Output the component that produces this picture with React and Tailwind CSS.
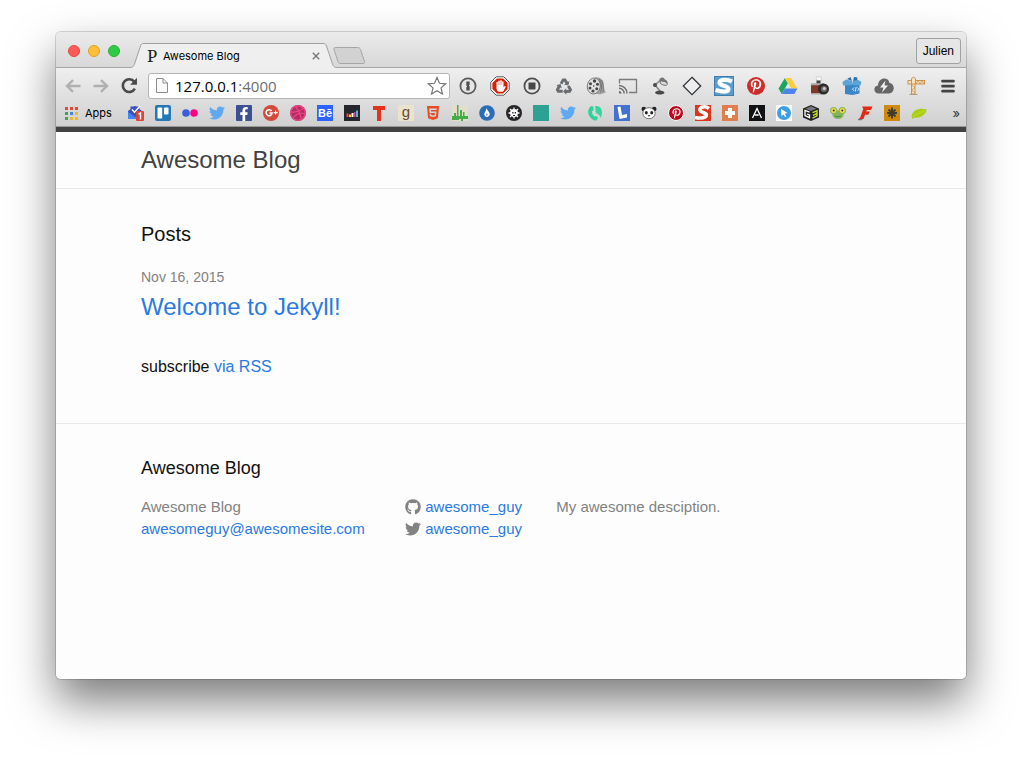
import React from "react";
import {
  FaTwitter, FaFacebookF, FaDribbble, FaHtml5, FaGithub, FaPinterestP,
} from "react-icons/fa";

const S = ({ v = 16, className = "size-4", children }) => (
  <svg viewBox={`0 0 ${v} ${v}`} className={className} aria-hidden="true">{children}</svg>
);

const Arrow = ({ flip }) => (
  <svg viewBox="0 0 16 14" className={flip ? "h-3.5 w-4 rotate-180" : "h-3.5 w-4"} fill="none" stroke="#b0b0b0" strokeWidth="2.4" aria-hidden="true">
    <path d="M15.500 7H2M8 1.200 2 7l6 5.800" />
  </svg>
);

const Pinterest = ({ className }) => (
  <span className={`flex items-center justify-center rounded-full text-white ${className}`}>
    <FaPinterestP />
  </span>
);

const RecycleArm = ({ rotate }) => (
  <path d="M5.800 7 8.400 2.500h3.400L13.900 6l1.500-.9-1 4.500-4.400-1.200 1.400-.8-1.300-2.300L8.200 8.500z" transform={`rotate(${rotate} 10 11)`} />
);

const extensions = [
  ["Password manager", <S v={20} className="size-5"><circle cx="10" cy="10" r="7.600" fill="#e6e6e6" stroke="#5c5c5c" strokeWidth="1.800" /><path d="M8.300 5.500h3.400v3.200l-.8.9.8.9v4H8.300v-3.200l.8-.9-.8-.9z" fill="#505050" /></S>],
  ["Ad blocker", <S v={20} className="size-5"><path d="M6.200.8h7.600l5.400 5.400v7.600l-5.400 5.400H6.200L.8 13.800V6.200z" fill="#fff" stroke="#555" strokeWidth="1" /><path d="M6.900 2.400h6.200l4.500 4.500v6.200l-4.500 4.500H6.900l-4.500-4.500V6.900z" fill="#d81e05" /><path d="M6.500 9.500V6.200q.8-.9 1.400 0V9h.4V4.900q.8-.9 1.500 0V9h.4V4.400q.8-.9 1.500 0V9h.4V5.600q.8-.8 1.400 0v6l1-1.400q1.100-.5 1.200.6l-2.200 4.100q-.6.900-1.600.9H9q-2.500-.4-2.500-3z" fill="#fff" /></S>],
  ["Stop", <S v={20} className="size-5"><circle cx="10" cy="10" r="7.600" fill="#e6e6e6" stroke="#505050" strokeWidth="1.800" /><rect x="6.500" y="6.500" width="7" height="7" rx=".8" fill="#484848" /></S>],
  ["Recycle", <S v={20} className="size-5"><g fill="#696d71"><RecycleArm rotate={0} /><RecycleArm rotate={120} /><RecycleArm rotate={240} /></g></S>],
  ["Film", <S v={20} className="size-5"><path d="M9 1.500c6-1 9 3 9 8 0 3 .5 5 2 7l-6 2-6-1z" fill="#a5a5a5" /><path d="M13 2.500c3 4 3 10 1.500 14M15.500 4c2 4 2 9 1.500 12" fill="none" stroke="#666" strokeWidth=".8" /><ellipse cx="7.800" cy="10" rx="6.500" ry="8" fill="#e2e2e2" stroke="#666" strokeWidth=".8" transform="rotate(10 7.800 10)" /><g fill="#484848"><circle cx="8.500" cy="5" r="1.700" /><circle cx="4.500" cy="7.800" r="1.500" /><circle cx="4" cy="12" r="1.500" /><circle cx="7" cy="15" r="1.600" /><circle cx="10.700" cy="12.800" r="1.500" /><circle cx="11.500" cy="8.300" r="1.500" /><circle cx="7.700" cy="10" r=".8" /></g></S>],
  ["Cast", <S v={20} className="size-5"><path d="M1.500 7.500V3.500h17V16.500H11" fill="none" stroke="#7b7b7b" strokeWidth="1.300" /><path d="M1 9.500a8 8 0 0 1 8 8M1 12.300a5.200 5.200 0 0 1 5.200 5.200" fill="none" stroke="#6a6a6a" strokeWidth="1.400" /><path d="M1 15a2.500 2.500 0 0 1 2.500 2.500H1z" fill="#6a6a6a" /></S>],
  ["Lamp", <S v={20} className="size-5"><path d="m10.500 4-5.500 5 5 6" fill="none" stroke="#888" strokeWidth="1.600" /><path d="M9.500 3Q13 0 15 3.500q3 1 2.500 4.500L10 7z" fill="#757575" /><ellipse cx="13.700" cy="7.200" rx="3.800" ry="1.900" fill="#ddd" stroke="#666" strokeWidth=".8" transform="rotate(18 13.700 7.200)" /><circle cx="5" cy="9" r="2" fill="#4a4a4a" /><path d="M5 16.500c1.500-2.800 8-2.800 9.500 0-.5 2.800-9 2.800-9.500 0z" fill="#484848" /></S>],
  ["Diamond", <S v={20} className="size-5"><path d="m10 1.300 8.700 8.700-8.700 8.700L1.300 10z" fill="#ededed" stroke="#30343a" strokeWidth="1.300" /></S>],
  ["Stylish", <S v={20} className="size-5"><rect x=".5" y=".5" width="19" height="19" fill="#5c9ccc" stroke="#3f7daf" /><path d="M18 5.500C14 3.500 6 3 5.500 6.500S14.500 9.500 14.500 13s-6.500 3-13 1" fill="none" stroke="#fff" strokeWidth="4.200" /></S>],
  ["Pin it", <Pinterest className="size-[18px] bg-[#c9302c] text-[14px]" />],
  ["Drive", <S v={20} className="size-5"><path d="M7 2h6l6.300 10.500h-6z" fill="#fccd3a" /><path d="M6.700 2.200 9.800 7.500 3.700 18 .6 12.600z" fill="#1da362" /><path d="M7 12.500h12.400L16.300 18H3.800z" fill="#4c83ee" /></S>],
  ["Camera", <S v={20} className="size-5"><path d="m6 1 5-.5 1 4-5 1z" fill="#f5f5f5" stroke="#bbb" strokeWidth=".5" /><path d="M6.500 4.500h4V8h-4z" fill="#444" /><rect x="1" y="8.500" width="12" height="9" rx="1" fill="#7d3826" /><path d="M1 7.200h13v2H1zM1 17h11v1.500H1z" fill="#aaa" /><circle cx="13.500" cy="13" r="5.500" fill="#2a2a2a" /><circle cx="14" cy="13" r="3" fill="#6d6d6d" /><circle cx="14.300" cy="12.500" r="1.500" fill="#ccc" /></S>],
  ["Package", <S v={20} className="size-5"><path d="M3 7.500h14.500v10l-7 1.500L3 18z" fill="#3b86c4" /><path d="m.5 6 3.500-2.500 6 1.500v4l-9 .5zM10.500 5l5-1.500L19.500 6l-1 3.500-8-.5z" fill="#5ba4d8" /><path d="m5 3 3.500-2 1.500 4zM15.500 1.500 12 1l-1 4 4-1z" fill="#2c6fa9" /><path d="m12 11.500-1.500 1.700 1.500 1.700m3.500-3.400 1.500 1.700-1.500 1.700m-1.300-4-.9 4.600" stroke="#fff" fill="none" strokeWidth=".8" /></S>],
  ["Cloud", <S v={20} className="size-5"><path d="M5 17.500C-1 17.500-1 10 4 9.500 4.200 1 14.500.5 15.500 7c6 .5 5.500 10.500-.8 10.500z" fill="#666" /><path d="m11.500 4.500-5.500 7h3.500L8 16.500l6-7h-3.500z" fill="#f2f2f2" /></S>],
  ["Crane", <S v={20} className="size-5"><rect x="2" y="4.500" width="16.500" height="3.500" fill="#f6e2c2" stroke="#c98a3c" strokeWidth=".9" /><path d="M5.500 8V2.500L7.500 1l2 1.500V8" fill="#f6e2c2" stroke="#c98a3c" strokeWidth=".9" /><rect x="5.500" y="8" width="3.500" height="10" fill="#f6e2c2" stroke="#c98a3c" strokeWidth=".9" /><path d="m5.500 9 3.500 2.500-3.500 2.500 3.500 2.500M10 8l2-3.500L14 8l2-3.500L18 8" fill="none" stroke="#c98a3c" strokeWidth=".7" /><path d="M3.500 18h8v1h-8z" fill="#b99a78" /></S>],
  ["Menu", <S v={20} className="size-5"><path d="M4.500 5.200h11M4.500 10.200h11M4.500 15.200h11" stroke="#444" strokeWidth="2.700" strokeLinecap="round" /></S>],
];

const Tile = ({ className, children }) => (
  <span className={`flex size-4 items-center justify-center ${className}`}>{children}</span>
);

const bookmarks = [
  ["Inbox", <S><path d="m0 6 7-5 7 5v8H0z" fill="#2a56c6" /><path d="M2.500 1.500h9V9L7 12 2.500 9z" fill="#4150bd" /><path d="m4 4.500 2.500 2.700L12 1" stroke="#fff" strokeWidth="1.500" fill="none" /><path d="m0 7 7 5 7-5v7H0z" fill="#4285f4" /><rect x="8" y="6" width="8" height="10" rx="1" fill="#db4437" /><path d="m10.500 9.200 2-1.200v6.500" stroke="#fff" strokeWidth="1.500" fill="none" /></S>],
  ["Trello", <S><rect width="16" height="16" rx="2" fill="#2378b5" /><rect x="2.500" y="2.500" width="4.700" height="11" rx=".8" fill="#fff" /><rect x="9" y="2.500" width="4.500" height="7" rx=".8" fill="#fff" /></S>],
  ["Flickr", <S><circle cx="4" cy="8" r="3.800" fill="#3a5ce0" /><circle cx="12" cy="8" r="3.800" fill="#ff0084" /></S>],
  ["Twitter", <FaTwitter className="size-4 text-[#5fa9f0]" />],
  ["Facebook", <Tile className="items-end rounded-[1px] bg-[#3b5091]"><FaFacebookF className="size-3.5 text-white" /></Tile>],
  ["Google Plus", <S><circle cx="8" cy="8" r="8" fill="#d24a3a" /><path d="M8.600 6A3 3 0 1 0 9.100 8H6.500" fill="none" stroke="#fff" strokeWidth="1.500" /><path d="M10.600 7.600h4M12.600 5.600v4" stroke="#fff" strokeWidth="1.200" /></S>],
  ["Dribbble", <Tile className="rounded-full bg-[#b92c62]"><FaDribbble className="size-4 text-[#e9488a]" /></Tile>],
  ["Behance", <Tile className="bg-[#2b64ff] font-['Liberation_Sans',sans-serif] text-[11px] font-bold text-white">Bē</Tile>],
  ["Deezer", <S><path d="M0 0h16v16H0z" fill="#25272f" /><path d="M2.500 8.500h2V12h-2z" fill="#f43" /><path d="M5 9.500h2V12H5z" fill="#fc3" /><path d="M7.500 8h2v4h-2z" fill="#fff" /><path d="M10 7h1.500v5H10z" fill="#e3398b" /><path d="M12 5.500h2V12h-2z" fill="#4bc" /></S>],
  ["T", <S><path d="M2 1h12v4h-4v11H6V5H2z" fill="#e2341d" /></S>],
  ["Goodreads", <Tile className="bg-[#eae4cf] pb-0.5 font-['Liberation_Sans',sans-serif] text-[15px] leading-3 text-[#6b4a2b]">g</Tile>],
  ["HTML5", <FaHtml5 className="size-4 text-[#e44d26]" />],
  ["Garden", <S><path d="M0 1h16v15H0z" fill="#e3ddca" /><path d="M0 11h16v3H0z" fill="#d55b4c" /><path d="M0 15v-4h2V8h2v3h1V0h1.500v11H8V5h2v6h1V7h1.500v4H16v3h-5v2H9v-2H7v1z" fill="#43ae48" /></S>],
  ["Drop", <S><circle cx="8" cy="8" r="7.800" fill="#2a6db5" /><path d="M7.500 3C8.500 6 11 7 10.700 9.500 10 13 5.200 12.500 5.300 9c.2-2 1.900-3 2.200-6z" fill="#fff" /><path d="M7.700 8c1.300 1 1 2.500-.4 3z" fill="#2a6db5" /></S>],
  ["Gear", <S><circle cx="8" cy="8" r="8" fill="#25262a" /><circle cx="8" cy="8" r="3.900" fill="#fff" /><path d="M8 2.500v11M2.500 8h11M4 4l8 8M12 4l-8 8" stroke="#fff" strokeWidth="1.300" /><path d="M6.200 7h1.300v1.500H6.200zM8.700 7H10v1.500H8.700zM7 10h2v1H7z" fill="#25262a" /></S>],
  ["Teal", <Tile className="bg-[#2ba294]" />],
  ["Twitter feed", <FaTwitter className="size-4 text-[#5fa9f0]" />],
  ["Phone", <S><path d="M4.500 1C1 3 .5 7 2 10.500S7.500 16 9.500 15.500l1.500-2.700-2-1.800-1.500.5C5.500 10 4.700 7.500 5.200 6l1.500-.8-.4-3.700z" fill="#2fd39a" /><path d="M8 1c9-1 7.500 10 5.300 12 .2-2-.8-3-2.800-4C7.500 7.500 9 4.500 8 1z" fill="#36d6a0" /></S>],
  ["L", <S><path d="M0 0h16v16H0z" fill="#4271ce" /><path d="m3.500 2 3-.5L8 10l5-1v3.500L5.500 14z" fill="#fff" /></S>],
  ["Panda", <S><circle cx="2.800" cy="4" r="2.300" fill="#222" /><circle cx="13.200" cy="4" r="2.300" fill="#222" /><ellipse cx="8" cy="8.200" rx="6.200" ry="5.500" fill="#fff" stroke="#555" strokeWidth=".8" /><ellipse cx="5.300" cy="7.800" rx="1.500" ry="1.700" fill="#222" /><ellipse cx="10.700" cy="7.800" rx="1.500" ry="1.700" fill="#222" /><path d="M6.500 10.300h3L8 11.800z" fill="#222" /></S>],
  ["Pinterest", <Pinterest className="size-4 border border-white bg-[#bd081c] text-[11px]" />],
  ["Scribble", <S><path d="M0 0h16v16H0z" fill="#dc351d" /><path d="M14 3.500C10 .5 4.500 2 5 5s6.500 2.500 6.500 5-5.500 4-11.500 2.500" fill="none" stroke="#fff" strokeWidth="3.500" /></S>],
  ["Plus", <S><path d="M0 0h16v16H0z" fill="#df7f4d" /><path d="M6 3h4v3h3v4h-3v3H6v-3H3V6h3z" fill="#fff" /></S>],
  ["A", <S><path d="M0 0h16v16H0z" fill="#101214" /><path d="M3.500 13 8 3.500l4.500 9.500M5.700 10h4" fill="none" stroke="#fff" strokeWidth="1.300" /></S>],
  ["Cursor", <S><path d="M0 0h16v16H0z" fill="#fff" /><circle cx="8" cy="8" r="7" fill="#3d9fe0" /><path d="m5 4 6.500 4-2.700.7 1.500 2.700-1.200.7-1.600-2.700L5.500 11z" fill="#fff" /></S>],
  ["Cube", <S><path d="m8 0 8 3.500v9L8 16l-8-3.500v-9z" fill="#222" /><path d="M8 1.300 13.500 3.700 8 6 2.500 3.700z" fill="#777" /><path d="M6.500 7.200 2 5.500v5l4.500 2.200V10L4 9" fill="none" stroke="#fff" strokeWidth="1.300" /><path d="M9.500 7.700 14 5.800v5l-4.500 2.300M10 10.300l4-1.800" fill="none" stroke="#c5dc28" strokeWidth="1.400" /></S>],
  ["Frog", <S><ellipse cx="8" cy="9.800" rx="5.600" ry="4.200" fill="#83b559" /><circle cx="3.700" cy="5.500" r="3.600" fill="#83b559" /><circle cx="12.300" cy="5.500" r="3.600" fill="#83b559" /><circle cx="3.700" cy="5.500" r="2.500" fill="#f6dc45" /><circle cx="12.300" cy="5.500" r="2.500" fill="#f6dc45" /><circle cx="3.700" cy="5.500" r="1" fill="#333" /><circle cx="12.300" cy="5.500" r="1" fill="#333" /><path d="M5 11q3 1.500 6 0" stroke="#4e7c35" fill="none" strokeWidth=".8" /></S>],
  ["F", <S><path d="M5 1.500h10.500L14 5H9.800l-.6 1.600h3.600L11.300 9.700H8L6.500 14H1.500l1.700-1.500L6.300 4z" fill="#df2c15" /><path d="M1 14h4.500l-.5 1.200H1z" fill="#777" /></S>],
  ["Asterisk", <S><path d="M0 0h16v16H0z" fill="#d08a0a" /><path d="M8 2.500v11M3 8h10M4.500 4.500l7 7M11.500 4.500l-7 7" stroke="#3f3a32" strokeWidth="1.900" /></S>],
  ["Leaf", <S><path d="M.5 11C2 4.500 9 2.500 15.500 4.500 15.500 9 9 14 3.500 12.500L1.500 14z" fill="#a9cf13" /><path d="M2 11.500C6 9 10 7.500 14 5.500" stroke="#c2e03a" fill="none" strokeWidth=".8" /></S>],
];

const appColours = [
  "bg-[#e0483a]", "bg-[#e0483a]", "bg-[#e0483a]",
  "bg-[#3ba55c]", "bg-[#4a83ea]", "bg-[#efb72e]",
  "bg-[#3ba55c]", "bg-[#efb72e]", "bg-[#efb72e]",
];

function TabStrip() {
  return (
    <div className="flex h-9 items-end border-b border-[#a5a5a5] bg-linear-to-b from-[#ebebeb] to-[#d8d8d8] pl-3">
      <div className="mb-2.5 flex gap-2">
        <button aria-label="Close window" className="size-3 rounded-full border border-[#e2493f] bg-[#fc5b57]" />
        <button aria-label="Minimise window" className="size-3 rounded-full border border-[#dfa023] bg-[#fdbe38]" />
        <button aria-label="Zoom window" className="size-3 rounded-full border border-[#27b131] bg-[#2fcb45]" />
      </div>
      <div className="-mb-px ml-2.5 flex">
        <svg viewBox="0 0 14 25" className="h-[25px] w-3.5" aria-hidden="true">
          <path d="M0 24.500c2.500 0 3.500-1 4.500-3.500L10.500 3c.7-2 1.500-2.500 3.500-2.500V25H0z" fill="#efefef" />
          <path d="M0 24.500c2.500 0 3.500-1 4.500-3.500L10.500 3c.7-2 1.500-2.500 3.500-2.500" fill="none" stroke="#a0a0a0" />
        </svg>
        <div className="flex h-[25px] w-[179px] items-center border-t border-[#a0a0a0] bg-[#efefef] pl-[3px]">
          <span className="w-4 font-['Noto_Serif','DejaVu_Serif',serif] text-[17px] leading-5 text-[#222]">P</span>
          <span className="flex-1 whitespace-nowrap text-[11px]">Awesome Blog</span>
          <button aria-label="Close tab" className="mr-[3px]">
            <svg viewBox="0 0 8 8" className="size-2" aria-hidden="true"><path d="m.8.800 6.400 6.400M7.200.800.800 7.200" stroke="#777" strokeWidth="1.400" /></svg>
          </button>
        </div>
        <svg viewBox="0 0 14 25" className="h-[25px] w-3.5" aria-hidden="true">
          <path d="M14 24.500c-2.500 0-3.500-1-4.500-3.500L3.500 3C2.800 1 2 .5 0 .5V25h14z" fill="#efefef" />
          <path d="M14 24.500c-2.500 0-3.500-1-4.500-3.500L3.500 3C2.800 1 2 .5 0 .5" fill="none" stroke="#a0a0a0" />
        </svg>
      </div>
      <button aria-label="New tab" className="mb-[3px] -ml-1">
        <svg viewBox="0 0 33 17" className="h-[17px] w-[33px]" aria-hidden="true">
          <path d="M2.500.5h22c1.500 0 2.500.5 3 2l4 12c.4 1.300 0 2-1.500 2H8c-1.700 0-2.500-.6-3-2L1 2.500C.6 1.200 1 .5 2.500.5z" fill="#d2d2d2" stroke="#a5a5a5" />
        </svg>
      </button>
      <button className="mr-[5px] mb-[3px] ml-auto h-[26px] rounded-[3px] border border-[#a2a2a2] bg-[#e6e6e6] px-[6px] font-['Liberation_Sans',sans-serif] text-[12px]">Julien</button>
    </div>
  );
}

function Toolbar() {
  return (
    <div className="flex h-[35px] items-center pr-2">
      <div className="flex w-[92px] items-center gap-3 pl-[9px]">
        <button aria-label="Back"><Arrow /></button>
        <button aria-label="Forward"><Arrow flip /></button>
        <button aria-label="Reload">
          <S className="size-[17px]"><path d="M13 11A6 6 0 1 1 12.500 4.500" fill="none" stroke="#4a4a4a" strokeWidth="2.500" /><path d="M15 .8v6.400H8.600z" fill="#4a4a4a" /></S>
        </button>
      </div>
      <div className="flex h-[26px] flex-1 items-center rounded-[3px] border border-[#b4b4b4] bg-white pr-0.5 pl-1">
        <svg viewBox="0 0 12 15" className="mx-[3px] h-[15px] w-3" fill="#fafafa" stroke="#8c8c8c" aria-hidden="true"><path d="M.5.500h6.500l4.500 4.500v9.500H.5zM7 .500V5h4.500" /></svg>
        <a href="#url" className="ml-1 flex-1 font-['Open_Sans',sans-serif] text-[15px] leading-5">127.0.0.1<span className="text-[#6d6d6d]">:4000</span></a>
        <button aria-label="Bookmark this page">
          <S v={20} className="size-5"><path d="m10 1.500 2.500 5.800 6.200.5-4.700 4.100 1.500 6.200L10 14.800l-5.500 3.300L6 11.900 1.300 7.800l6.200-.5z" fill="#fff" stroke="#777" strokeWidth="1.200" /></S>
        </button>
      </div>
      <div className="ml-2 flex gap-3">
        {extensions.map(([name, icon]) => (
          <button key={name} aria-label={name} className="flex size-5 items-center justify-center">{icon}</button>
        ))}
      </div>
    </div>
  );
}

function BookmarksBar() {
  return (
    <nav aria-label="Bookmarks" className="flex h-[23px] items-center pr-1.5 pb-[3px] pl-[9px]">
      <a href="#apps" className="flex items-center gap-[7px] text-[11px]">
        <span className="grid grid-cols-3 gap-0.5">
          {appColours.map((c, i) => <span key={i} className={`size-[3px] ${c}`} />)}
        </span>
        <span className="w-[43px]">Apps</span>
      </a>
      <div className="flex gap-[11px]">
        {bookmarks.map(([name, icon]) => (
          <a key={name} href="#bookmark" aria-label={name} className="block size-4">{icon}</a>
        ))}
      </div>
      <button aria-label="More bookmarks" className="ml-auto text-[13px] leading-4 text-[#333]">»</button>
    </nav>
  );
}

function Blog() {
  return (
    <div className="flex-1 rounded-b-[5px] border-t-[5px] border-[#424242] bg-[#fdfdfd] font-['Liberation_Sans',sans-serif] text-[#111]">
      <header className="border-b border-[#e8e8e8]">
        <div className="mx-auto flex h-14 max-w-[740px] items-center">
          <a href="#home" className="text-[24px] leading-9 text-[#424242]">Awesome Blog</a>
        </div>
      </header>
      <main className="mx-auto max-w-[740px] pt-[30px] pb-11">
        <h1 className="mb-4 text-[20px] leading-[30px]">Posts</h1>
        <time className="block text-[14px] leading-6 text-[#828282]">Nov 16, 2015</time>
        <h2 className="mb-[30px] text-[24px] leading-9">
          <a href="#post" className="text-[#2a7ae2]">Welcome to Jekyll!</a>
        </h2>
        <p className="text-[16px] leading-6">subscribe <a href="#rss" className="text-[#2a7ae2]">via RSS</a></p>
      </main>
      <footer className="border-t border-[#e8e8e8]">
        <div className="mx-auto max-w-[740px] pt-[30px]">
          <h2 className="mb-3.5 text-[18px] leading-7">Awesome Blog</h2>
          <div className="-mr-[15px] grid grid-cols-[7fr_4fr_9fr] text-[15px] leading-[22px] text-[#828282]">
            <ul>
              <li>Awesome Blog</li>
              <li><a href="mailto:awesomeguy@awesomesite.com" className="text-[#2a7ae2]">awesomeguy@awesomesite.com</a></li>
            </ul>
            <ul>
              <li><a href="#github" className="flex items-center gap-1 text-[#2a7ae2]"><FaGithub className="size-4 text-[#828282]" />awesome_guy</a></li>
              <li><a href="#twitter" className="flex items-center gap-1 text-[#2a7ae2]"><FaTwitter className="size-4 text-[#828282]" />awesome_guy</a></li>
            </ul>
            <p>My awesome desciption.</p>
          </div>
        </div>
      </footer>
    </div>
  );
}

export default function App() {
  return (
    <div className="flex min-h-screen flex-col bg-white px-14 pt-8 pb-20 font-['Inter',sans-serif] text-black">
      <div className="flex flex-1 flex-col rounded-[5px] shadow-[0_0_0_1px_rgba(0,0,0,0.15),0_22px_45px_rgba(0,0,0,0.52)]">
        <div className="overflow-hidden rounded-t-[5px]">
          <TabStrip />
          <div className="border-b border-[#999] bg-linear-to-b from-[#efefef] to-[#d0d0d0]">
            <Toolbar />
            <BookmarksBar />
          </div>
        </div>
        <Blog />
      </div>
    </div>
  );
}
